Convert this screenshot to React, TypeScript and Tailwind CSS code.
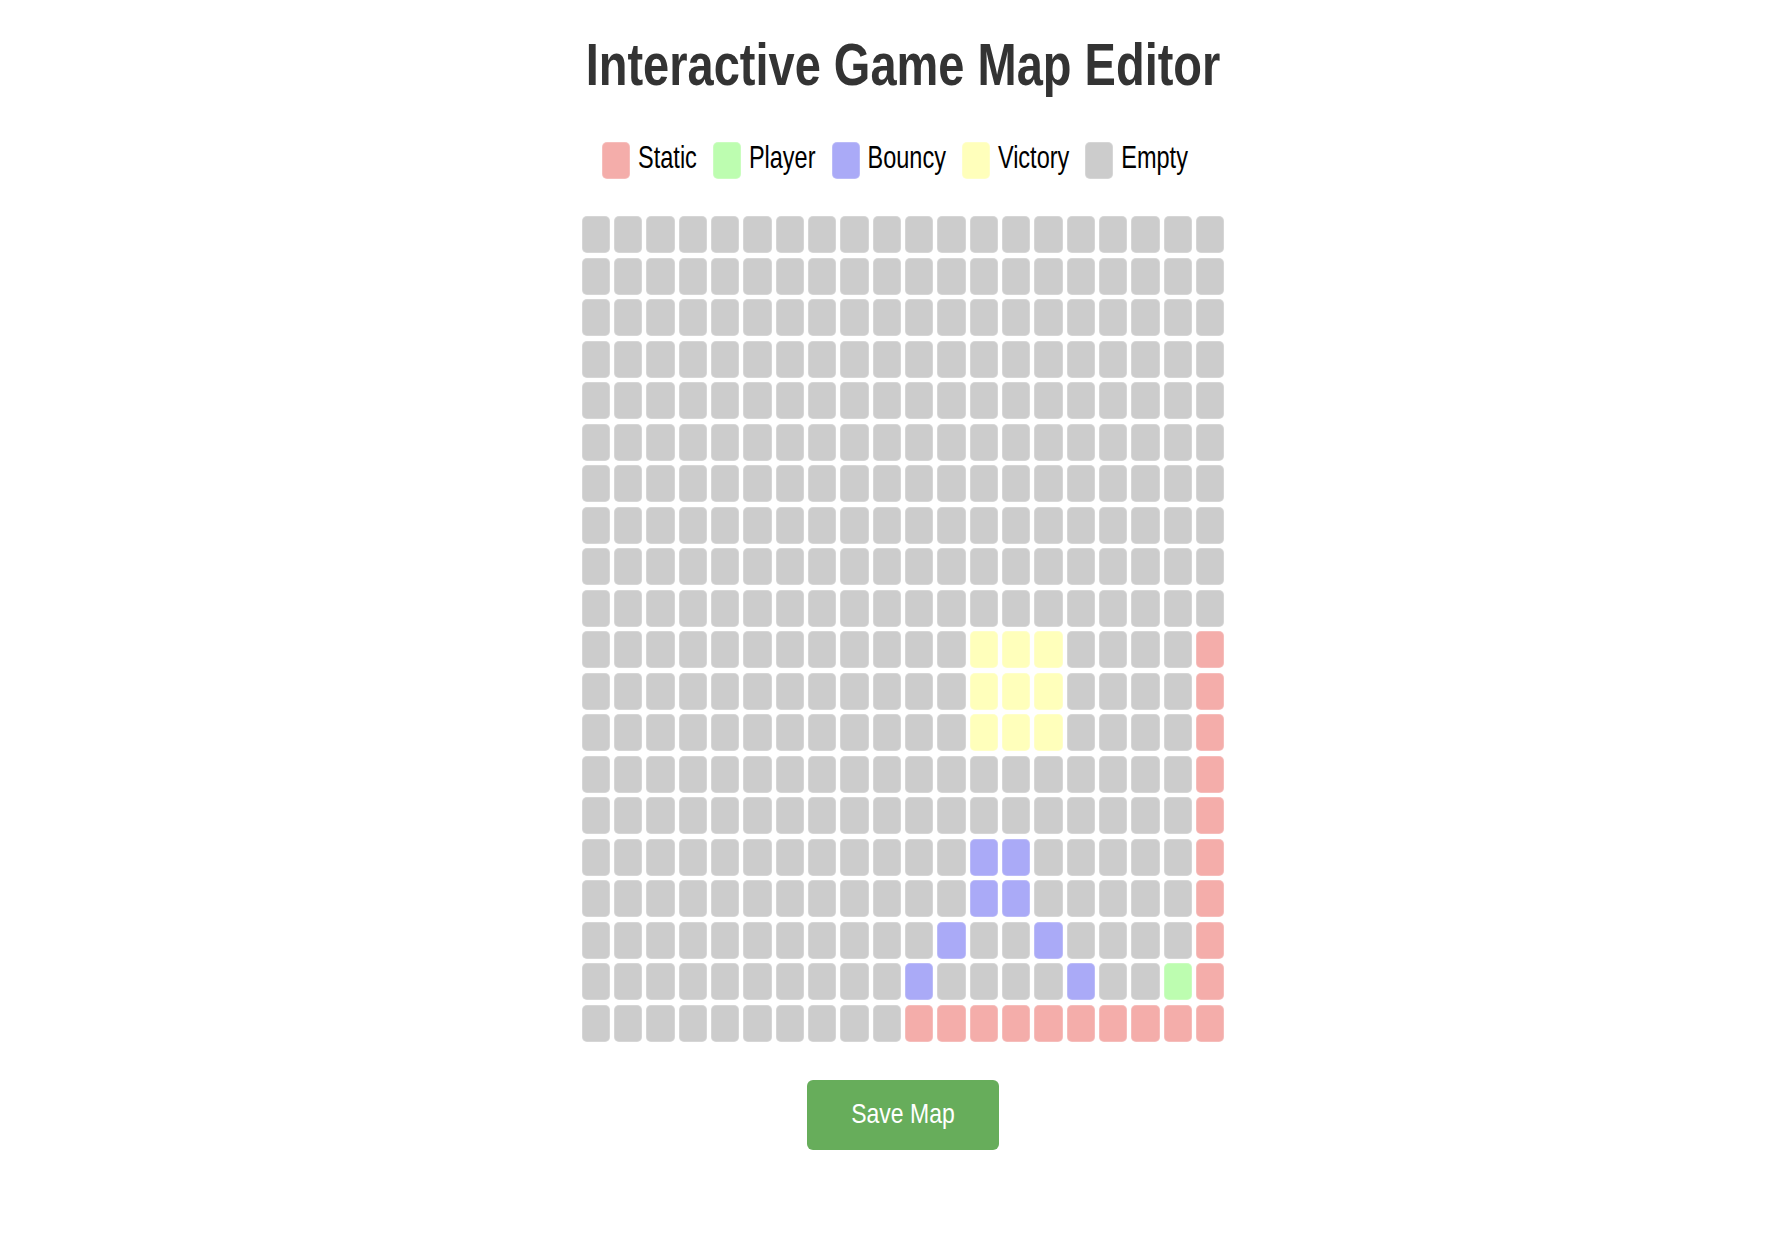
import React from "react";

type Cell = "static" | "player" | "bouncy" | "victory" | "empty";

const SIZE = 20;

const cellColor: Record<Cell, string> = {
  static: "bg-[#f4adaa]",
  player: "bg-[#bdfdb0]",
  bouncy: "bg-[#aaaaf7]",
  victory: "bg-[#ffffbb]",
  empty: "bg-[#cccccc]",
};

const legend: { type: Cell; label: string }[] = [
  { type: "static", label: "Static" },
  { type: "player", label: "Player" },
  { type: "bouncy", label: "Bouncy" },
  { type: "victory", label: "Victory" },
  { type: "empty", label: "Empty" },
];

const buildMap = (): Cell[][] => {
  const map: Cell[][] = Array.from({ length: SIZE }, () =>
    Array.from({ length: SIZE }, () => "empty" as Cell)
  );
  // victory block
  for (let r = 10; r <= 12; r++) {
    for (let c = 12; c <= 14; c++) map[r][c] = "victory";
  }
  // right wall
  for (let r = 10; r < SIZE; r++) map[r][19] = "static";
  // floor
  for (let c = 10; c < SIZE; c++) map[19][c] = "static";
  // bouncy pads
  map[15][12] = "bouncy";
  map[15][13] = "bouncy";
  map[16][12] = "bouncy";
  map[16][13] = "bouncy";
  map[17][11] = "bouncy";
  map[17][14] = "bouncy";
  map[18][10] = "bouncy";
  map[18][15] = "bouncy";
  map[18][18] = "player";
  return map;
};

const font = "font-['Liberation_Sans',Arial,sans-serif]";

export default function App() {
  const [map, setMap] = React.useState<Cell[][]>(buildMap);

  const cycle = (r: number, c: number) => {
    const order: Cell[] = ["empty", "static", "player", "bouncy", "victory"];
    setMap((prev) =>
      prev.map((row, ri) =>
        row.map((cell, ci) =>
          ri === r && ci === c ? order[(order.indexOf(cell) + 1) % order.length] : cell
        )
      )
    );
  };

  return (
    <div className={`min-h-screen bg-white flex flex-col items-center pl-4 pt-[41px] ${font}`}>
      <h1 className="text-[47px] leading-[47px] font-bold text-[#333333] scale-y-[1.26]">
        Interactive Game Map Editor
      </h1>

      <div className="flex items-center mt-[54px]">
        {legend.map((item) => (
          <div key={item.type} className="flex items-center mr-4">
            <div
              className={`w-[28px] h-[37px] rounded-[5px] border border-white/20 ${cellColor[item.type]}`}
            />
            <span className="ml-2 mb-[7px] text-[23.5px] leading-[24px] text-black scale-y-[1.36]">
              {item.label}
            </span>
          </div>
        ))}
      </div>

      <div className="mt-[37px] grid grid-cols-[repeat(20,28.5px)] gap-x-[3.83px] gap-y-[4.5px]">
        {map.map((row, r) =>
          row.map((cell, c) => (
            <div
              key={`${r}-${c}`}
              onClick={() => cycle(r, c)}
              className={`h-[37px] rounded-[5px] border border-white/20 cursor-pointer ${cellColor[cell]}`}
            />
          ))
        )}
      </div>

      <button className="mt-[38px] w-[192px] h-[70px] rounded-[6px] bg-[#67ad5b] text-white">
        <span className="inline-block text-[23px] leading-[23px] scale-y-[1.22]">Save Map</span>
      </button>
    </div>
  );
}
